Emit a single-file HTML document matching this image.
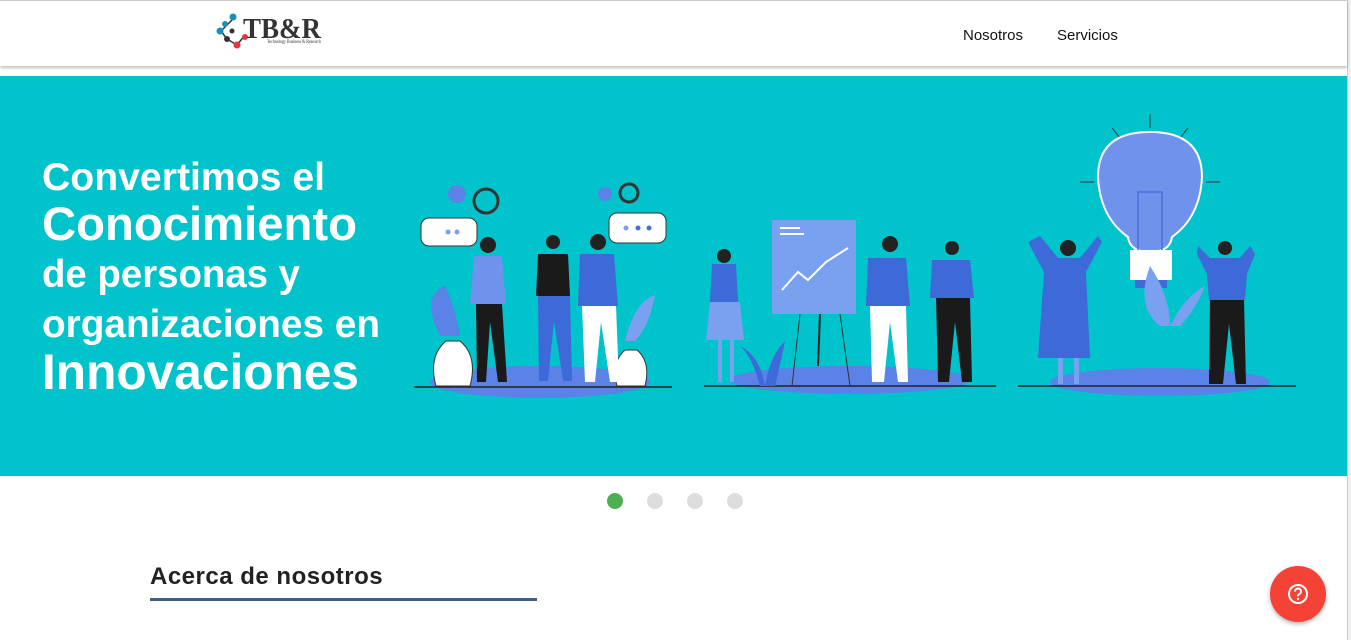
<!DOCTYPE html>
<html><head><meta charset="utf-8"><style>
html,body{margin:0;padding:0;width:1351px;height:640px;overflow:hidden;background:#fff;font-family:"Liberation Sans",sans-serif;}
.hdr{position:absolute;left:0;top:0;width:1347px;height:65px;background:#fff;border-top:1px solid #ccc;box-shadow:0 2px 3px rgba(0,0,0,.25);z-index:2}
.nav{position:absolute;top:26px;font-size:15px;color:#111}
.banner{position:absolute;left:0;top:76px;width:1347px;height:400px;background:#00c3cc}
.dot{position:absolute;top:493px;width:16px;height:16px;border-radius:50%;background:#ddd}
h2{position:absolute;left:150px;top:563px;margin:0;font-size:24px;font-weight:bold;color:#222;letter-spacing:0.5px}
.ul{position:absolute;left:150px;top:598px;width:387px;height:3px;background:#3f5f86}
.help{position:absolute;left:1270px;top:566px;width:56px;height:56px;border-radius:50%;background:#f44336;box-shadow:0 2px 4px rgba(0,0,0,.3)}
.sb{position:absolute;left:1347px;top:0;width:4px;height:640px;background:#f0f0f0;border-left:1px solid #ccc}
</style></head><body>
<div class="hdr">
<svg style="position:absolute;left:215px;top:10px" width="115" height="40">
<line x1="6" y1="20" x2="18" y2="8" stroke="#333" stroke-width="1.5"/><line x1="6" y1="20" x2="12" y2="28" stroke="#333" stroke-width="1.5"/><line x1="12" y1="28" x2="22" y2="34" stroke="#333" stroke-width="1.5"/><line x1="22" y1="34" x2="30" y2="24" stroke="#333" stroke-width="1.5"/>
<circle cx="18" cy="6" r="3.5" fill="#1a8fb5"/><circle cx="10" cy="13" r="3" fill="#1a8fb5"/><circle cx="5" cy="20" r="3.5" fill="#1a8fb5"/><circle cx="17" cy="20" r="2.5" fill="#333"/><circle cx="12" cy="28" r="3" fill="#333"/><circle cx="22" cy="34" r="3.5" fill="#e0383e"/><circle cx="30" cy="26" r="3" fill="#e0383e"/>
<text x="28" y="27" font-family="Liberation Serif" font-weight="bold" font-size="28" fill="#333" textLength="78" lengthAdjust="spacingAndGlyphs">TB&amp;R</text>
<text x="52" y="32" font-family="Liberation Serif" font-size="5" fill="#333" textLength="54" lengthAdjust="spacingAndGlyphs">Technology Business &amp; Research</text>
</svg>
<div class="nav" style="left:963px">Nosotros</div>
<div class="nav" style="left:1057px">Servicios</div>
</div>
<div class="sb"></div>
<div class="banner">
<svg width="1347" height="400" style="position:absolute;left:0;top:0">
<g fill="#fff" font-family="Liberation Sans,sans-serif" font-weight="bold">
<text x="42" y="114" font-size="39" textLength="283" lengthAdjust="spacingAndGlyphs">Convertimos el</text>
<text x="42" y="164" font-size="47" textLength="315" lengthAdjust="spacingAndGlyphs">Conocimiento</text>
<text x="42" y="211" font-size="39" textLength="258" lengthAdjust="spacingAndGlyphs">de personas y</text>
<text x="42" y="261" font-size="39" textLength="338" lengthAdjust="spacingAndGlyphs">organizaciones en</text>
<text x="42" y="313" font-size="50" textLength="317" lengthAdjust="spacingAndGlyphs">Innovaciones</text>
</g>
<g>
<ellipse cx="540" cy="306" rx="110" ry="16" fill="#5b82e6"/>
<line x1="414" y1="311" x2="672" y2="311" stroke="#222" stroke-width="1.5"/>
<rect x="421" y="142" width="56" height="28" rx="8" fill="#fff" stroke="#333"/><circle cx="448" cy="156" r="2.5" fill="#7aa0f0"/><circle cx="457" cy="156" r="2.5" fill="#7aa0f0"/>
<rect x="609" y="137" width="57" height="30" rx="8" fill="#fff" stroke="#333"/><circle cx="626" cy="152" r="2.5" fill="#7aa0f0"/><circle cx="638" cy="152" r="2.5" fill="#4a6fd8"/><circle cx="649" cy="152" r="2.5" fill="#4a6fd8"/>
<circle cx="457" cy="118" r="9" fill="#5b82e6"/><circle cx="486" cy="125" r="12" fill="none" stroke="#333" stroke-width="3"/><circle cx="605" cy="118" r="7" fill="#5b82e6"/><circle cx="629" cy="117" r="9" fill="none" stroke="#333" stroke-width="3"/>
<path d="M436 310 q-8-30 10-45 l14 0 q18 15 10 45z" fill="#fff" stroke="#333"/>
<path d="M617 310 q-6-24 8-36 l12 0 q14 12 8 36z" fill="#fff" stroke="#333"/>
<path d="M440 260 q-20-40 5-50 q10 20 15 50z" fill="#5b82e6"/><path d="M625 265 q10-40 30-46 q-5 30-20 46z" fill="#7aa0f0"/>
<circle cx="488" cy="169" r="8" fill="#222"/><path d="M474 180 h28 l4 48 h-36z" fill="#6f92ec"/><path d="M476 228 h26 l5 78 h-9 l-8-60 l-4 60 h-9z" fill="#1a1a1a"/>
<circle cx="553" cy="166" r="7" fill="#222"/><path d="M538 178 h30 l2 42 h-34z" fill="#1a1a1a"/><path d="M538 220 h32 l2 85 h-9 l-9-60 l-6 60 h-9z" fill="#3d6ad8"/>
<circle cx="598" cy="166" r="8" fill="#222"/><path d="M580 178 h34 l4 52 h-40z" fill="#3d6ad8"/><path d="M582 230 h34 l3 76 h-9 l-9-60 l-6 60 h-10z" fill="#fff"/>
</g>
<g>
<ellipse cx="850" cy="304" rx="120" ry="14" fill="#5b82e6"/>
<line x1="704" y1="310" x2="996" y2="310" stroke="#222" stroke-width="1.5"/>
<rect x="772" y="144" width="84" height="94" fill="#7aa0f0"/><polyline points="782,214 798,196 808,204 826,186 848,172" fill="none" stroke="#fff" stroke-width="2"/>
<line x1="780" y1="152" x2="800" y2="152" stroke="#fff" stroke-width="2"/><line x1="780" y1="158" x2="804" y2="158" stroke="#fff" stroke-width="2"/>
<line x1="800" y1="238" x2="792" y2="310" stroke="#333"/><line x1="840" y1="238" x2="850" y2="310" stroke="#333"/><line x1="820" y1="238" x2="818" y2="290" stroke="#222" stroke-width="2"/>
<path d="M760 310 q-8-30 -20-40 q20 10 25 40 q5-30 20-45 q-5 25 -10 45z" fill="#3d6ad8"/>
<circle cx="724" cy="180" r="7" fill="#222"/><path d="M712 188 h24 l2 38 h-28z" fill="#3d6ad8"/><path d="M710 226 h30 l4 38 h-38z" fill="#7aa0f0"/><rect x="718" y="264" width="4" height="42" fill="#7aa0f0"/><rect x="730" y="264" width="4" height="42" fill="#7aa0f0"/>
<circle cx="890" cy="168" r="8" fill="#222"/><path d="M868 182 h38 l4 48 h-44z" fill="#3d6ad8"/><path d="M870 230 h36 l2 76 h-10 l-8-60 l-6 60 h-12z" fill="#fff"/>
<circle cx="952" cy="172" r="7" fill="#222"/><path d="M932 184 h38 l4 38 h-44z" fill="#3d6ad8"/><path d="M936 222 h34 l2 84 h-10 l-7-60 l-6 60 h-11z" fill="#1a1a1a"/>
</g>
<g>
<ellipse cx="1160" cy="306" rx="110" ry="14" fill="#5b82e6"/>
<line x1="1018" y1="310" x2="1296" y2="310" stroke="#222" stroke-width="1.5"/>
<g stroke="#333" stroke-width="1"><line x1="1150" y1="38" x2="1150" y2="52"/><line x1="1112" y1="52" x2="1120" y2="62"/><line x1="1188" y1="52" x2="1180" y2="62"/><line x1="1080" y1="106" x2="1094" y2="106"/><line x1="1206" y1="106" x2="1220" y2="106"/></g>
<path d="M1150 176 q-20 0-22-15 q-28-20-30-60 q0-45 52-45 q52 0 52 45 q-2 40-30 60 q-2 15-22 15z" fill="#6f92ec" stroke="#fff" stroke-width="2"/>
<path d="M1138 176 v-60 h24 v60" fill="none" stroke="#4a6fd8" stroke-width="1.5"/>
<rect x="1130" y="174" width="42" height="30" fill="#fff"/><rect x="1135" y="204" width="32" height="8" fill="#3d6ad8"/>
<path d="M1160 250 q-25-20-10-60 q20 30 20 60 q15-30 35-40 q-10 25-25 40z" fill="#7aa0f0"/>
<circle cx="1068" cy="172" r="8" fill="#222"/><path d="M1040 160 l18 22 h22 l18-22 l4 6 l-16 30 l4 86 h-52 l6-86 l-16-30z" fill="#3d6ad8"/><rect x="1058" y="282" width="5" height="26" fill="#7aa0f0"/><rect x="1074" y="282" width="5" height="26" fill="#7aa0f0"/>
<circle cx="1225" cy="172" r="7" fill="#222"/><path d="M1198 170 l12 12 h30 l10-12 l5 8 l-8 20 l-2 26 h-36 l-2-26 l-10-20z" fill="#3d6ad8"/><path d="M1210 224 h34 l2 84 h-10 l-7-60 l-6 60 h-14z" fill="#1a1a1a"/>
</g>
</svg>
</div>
<div class="dot" style="left:607px;background:#4caf50"></div>
<div class="dot" style="left:647px"></div>
<div class="dot" style="left:687px"></div>
<div class="dot" style="left:727px"></div>
<h2>Acerca de nosotros</h2>
<div class="ul"></div>
<div class="help"><svg width="56" height="56"><circle cx="28" cy="28" r="9" fill="none" stroke="#fff" stroke-width="2"/><path d="M25 25.5 a3 3 0 1 1 4 2.8 q-1 .5 -1 2" fill="none" stroke="#fff" stroke-width="2"/><circle cx="28" cy="33" r="1.2" fill="#fff"/></svg></div>
</body></html>
